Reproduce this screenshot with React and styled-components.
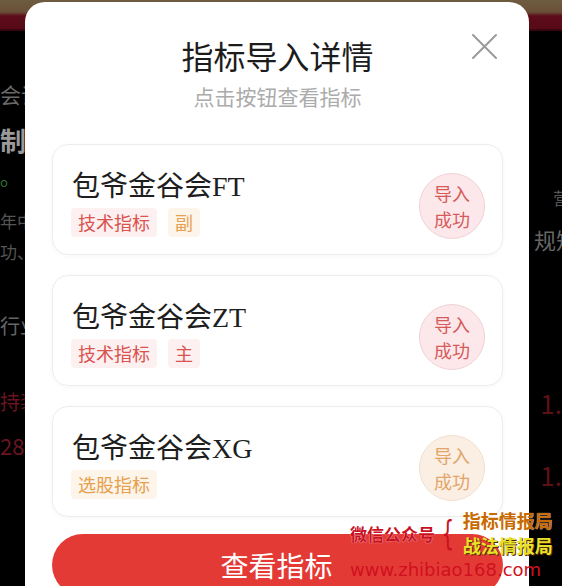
import styled, { createGlobalStyle } from "styled-components";

const GlobalStyle = createGlobalStyle`
  html, body {
    margin: 0;
    padding: 0;
    background: #000;
  }
  body {
    font-family: "Noto Sans CJK SC", "Noto Sans", sans-serif;
  }
`;

const items = [
  { name: "包爷金谷会FT", tags: [["技术指标", "red"], ["副", "orange"]], tone: "red" },
  { name: "包爷金谷会ZT", tags: [["技术指标", "red"], ["主", "red"]], tone: "red" },
  { name: "包爷金谷会XG", tags: [["选股指标", "orange"]], tone: "orange" },
];

const tones = {
  red: { bg: "#fdf0f0", fg: "#d9534f", badge: "#fce8ea", ring: "#efd2d6", text: "#d65a5a" },
  orange: { bg: "#fdf4ea", fg: "#e6a04e", badge: "#fbefe4", ring: "#f1e0d0", text: "#e2a468" },
};

const App = () => {
  return (
    <Page>
      <GlobalStyle />
      <TopBar>
        <TopStripe />
      </TopBar>
      <Behind>
        <SideColumn>
          <BgLine $mt={53} $size={21} $color="#6a6a6a">会议</BgLine>
          <BgLine $mt={22} $size={26} $color="#9a9a9a" $bold>制度</BgLine>
          <BgLine $mt={22} $size={13} $color="#2f6f2f">o</BgLine>
          <BgLine $mt={24} $size={17} $color="#555">年中</BgLine>
          <BgLine $mt={14} $size={17} $color="#555">功、</BgLine>
          <BgLine $mt={56} $size={20} $color="#666">行业</BgLine>
          <BgLine $mt={56} $size={20} $color="#6a1420">持装</BgLine>
          <BgLine $mt={22} $size={22} $color="#6a1420">28%</BgLine>
        </SideColumn>
        <SideColumn $right>
          <BgLine $mt={158} $size={17} $color="#555" $shift={-8}>营</BgLine>
          <BgLine $mt={22} $size={22} $color="#666" $shift={-16}>规矩</BgLine>
          <BgLine $mt={140} $size={26} $color="#5e1018">1.</BgLine>
          <BgLine $mt={46} $size={26} $color="#5e1018">1.</BgLine>
        </SideColumn>
      </Behind>

      <Modal>
        <CloseButton aria-label="close">
          <svg width="27" height="27" viewBox="0 0 27 27">
            <path d="M2 2 L25 25 M25 2 L2 25" stroke="#9a9a9a" strokeWidth="2" strokeLinecap="round" />
          </svg>
        </CloseButton>
        <Title>指标导入详情</Title>
        <Subtitle>点击按钮查看指标</Subtitle>

        <CardList>
          {items.map((item) => (
            <Card key={item.name}>
              <CardInfo>
                <CardTitle>{item.name}</CardTitle>
                <TagRow>
                  {item.tags.map(([label, tone]) => (
                    <Tag key={label} $tone={tone}>{label}</Tag>
                  ))}
                </TagRow>
              </CardInfo>
              <Badge $tone={item.tone}>
                <span>导入</span>
                <span>成功</span>
              </Badge>
            </Card>
          ))}
        </CardList>

        <ViewButton>查看指标</ViewButton>
      </Modal>

      <Watermark>
        <WmTop>
          <WmLabel>微信公众号</WmLabel>
          <Brace>{"{"}</Brace>
          <WmNames>
            <WmName $color="#c86a00">指标情报局</WmName>
            <WmName $color="#e6e22a" $dark>战法情报局</WmName>
          </WmNames>
        </WmTop>
        <WmUrl>www.zhibiao168.com</WmUrl>
      </Watermark>
    </Page>
  );
};
export default App;

const Page = styled.div`
  position: relative;
  width: 562px;
  height: 586px;
  overflow: hidden;
  background: #000;
`;

const TopBar = styled.div`
  height: 31px;
  background: linear-gradient(to bottom, #6e5c40 0px, #6a5038 12px, #5c0c1a 16px, #560a16 31px);
  display: flex;
  align-items: flex-end;
`;

const TopStripe = styled.div`
  height: 2px;
  width: 100%;
  background: #3a0610;
`;

const Behind = styled.div`
  display: flex;
  justify-content: space-between;
`;

const SideColumn = styled.div`
  width: ${(p) => (p.$right ? "34px" : "40px")};
  display: flex;
  flex-direction: column;
  align-items: ${(p) => (p.$right ? "flex-end" : "flex-start")};
  overflow: hidden;
`;

const BgLine = styled.div`
  margin-top: ${(p) => p.$mt}px;
  margin-right: ${(p) => p.$shift || 0}px;
  font-size: ${(p) => p.$size}px;
  line-height: 1;
  color: ${(p) => p.$color};
  font-weight: ${(p) => (p.$bold ? 700 : 400)};
  white-space: nowrap;
`;

const Modal = styled.div`
  position: absolute;
  left: 25px;
  top: 2px;
  width: 504px;
  height: 640px;
  background: #fff;
  border-radius: 20px;
  box-sizing: border-box;
  padding: 33px 26px 0 27px;
  display: flex;
  flex-direction: column;
  align-items: stretch;
`;

const CloseButton = styled.div`
  position: absolute;
  top: 31px;
  right: 31px;
  width: 27px;
  height: 27px;
  display: flex;
`;

const Title = styled.div`
  text-align: center;
  font-size: 32px;
  line-height: 40px;
  color: #1c1c1c;
  font-weight: 400;
`;

const Subtitle = styled.div`
  margin-top: 8px;
  text-align: center;
  font-size: 21px;
  line-height: 26px;
  color: #ababab;
`;

const CardList = styled.div`
  margin-top: 35px;
  display: flex;
  flex-direction: column;
  gap: 20px;
`;

const Card = styled.div`
  height: 111px;
  box-sizing: border-box;
  border: 1px solid #ededed;
  border-radius: 16px;
  box-shadow: 0 1px 4px rgba(0, 0, 0, 0.04);
  padding: 0 17px 0 18px;
  display: flex;
  align-items: center;
  justify-content: space-between;
`;

const CardInfo = styled.div`
  display: flex;
  flex-direction: column;
  gap: 4px;
  padding-top: 8px;
`;

const CardTitle = styled.div`
  font-family: "Liberation Serif", "Noto Sans CJK SC", serif;
  font-size: 28px;
  line-height: 34px;
  color: #1e1e1e;
  padding-left: 1px;
`;

const TagRow = styled.div`
  display: flex;
  gap: 11px;
`;

const Tag = styled.span`
  height: 29px;
  line-height: 29px;
  padding: 0 7px;
  border-radius: 4px;
  font-size: 18px;
  background: ${(p) => tones[p.$tone].bg};
  color: ${(p) => tones[p.$tone].fg};
`;

const Badge = styled.div`
  width: 66px;
  height: 66px;
  box-sizing: border-box;
  border-radius: 50%;
  border: 1px solid ${(p) => tones[p.$tone].ring};
  background: ${(p) => tones[p.$tone].badge};
  color: ${(p) => tones[p.$tone].text};
  font-size: 18px;
  line-height: 26px;
  display: flex;
  flex-direction: column;
  align-items: center;
  justify-content: center;
  margin-top: 12px;
`;

const ViewButton = styled.div`
  margin-top: 17px;
  height: 62px;
  border-radius: 31px;
  background: #e43a36;
  color: #fff;
  font-size: 28px;
  display: flex;
  align-items: center;
  justify-content: center;
  padding-right: 2px;
`;

const Watermark = styled.div`
  position: absolute;
  left: 350px;
  top: 508px;
  display: flex;
  flex-direction: column;
  font-family: "Noto Sans CJK SC", sans-serif;
`;

const WmTop = styled.div`
  display: flex;
  align-items: center;
`;

const WmLabel = styled.div`
  font-size: 17px;
  font-weight: 700;
  color: #c8101e;
  text-shadow: 0 0 1px #fff;
`;

const Brace = styled.div`
  font-family: "DejaVu Sans", sans-serif;
  font-size: 34px;
  line-height: 38px;
  color: #c8101e;
  margin: 0 4px 0 2px;
  transform: scaleX(0.6);
`;

const WmNames = styled.div`
  display: flex;
  flex-direction: column;
`;

const WmName = styled.div`
  font-size: 18px;
  line-height: 25px;
  font-weight: 700;
  color: ${(p) => p.$color};
  text-shadow: ${(p) => (p.$dark ? "1px 1px 0 #5a2a00" : "0 0 1px #fff")};
`;

const WmUrl = styled.div`
  font-family: "DejaVu Sans", sans-serif;
  font-size: 18px;
  line-height: 22px;
  color: #d0101e;
  margin-top: 1px;
`;
